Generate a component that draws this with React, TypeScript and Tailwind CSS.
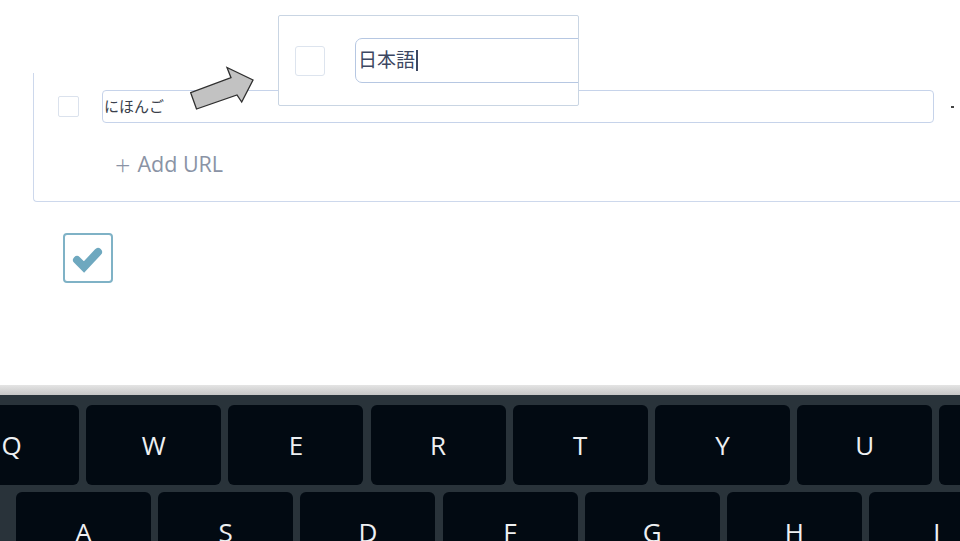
import React from "react";

const row1 = ["Q", "W", "E", "R", "T", "Y", "U", "I"];
const row2 = ["A", "S", "D", "F", "G", "H", "J"];

function Key({ label }: { label: string }) {
  return (
    <div className="w-[135px] h-[80px] shrink-0 rounded-[6px] bg-[#020a12] flex items-center justify-center text-[26px] text-[#eef0f2] leading-none">
      {label}
    </div>
  );
}

export default function App() {
  return (
    <main
      className="w-[960px] h-[541px] overflow-hidden bg-white flex flex-col"
      style={{ fontFamily: '"Open Sans", "Noto Sans CJK JP", sans-serif' }}
    >
      {/* page area */}
      <section className="relative h-[385px] shrink-0">
        <div className="mt-[73px] ml-[33px] h-[129px] border-l border-b border-[#cdd8ec] rounded-bl-[4px] flex flex-col">
          <div className="flex items-center mt-[17px] pl-[24px]">
            <div className="w-[21px] h-[21px] shrink-0 rounded-[2px] border border-[#dbe2ed]" />
            <div className="ml-[23px] w-[832px] h-[33px] shrink-0 rounded-[4px] border border-[#c6d3ea] flex items-center pl-[1px] text-[15px] text-[#3a3f4c]">
              にほんご
            </div>
            <div className="ml-[17px] w-[3px] h-[2px] bg-[#444]" />
          </div>
          <div className="mt-[25px] ml-[81px] flex items-center gap-[7px] text-[21.5px] text-[#8a93a5]">
            <span className="text-[27px] leading-none font-light">+</span>
            <span>Add URL</span>
          </div>
        </div>

        <div className="mt-[31px] ml-[63px] w-[50px] h-[50px] rounded-[4px] border-2 border-[#7fb2c6] flex items-center justify-center">
          <svg width="46" height="46" viewBox="0 0 46 46">
            <polyline
              points="12,25 19,32 33,17"
              fill="none"
              stroke="#6ea8bf"
              strokeWidth="8"
              strokeLinejoin="miter"
              strokeLinecap="round"
            />
          </svg>
        </div>

        {/* magnified popup */}
        <div className="absolute left-[278px] top-[15px] w-[301px] h-[91px] bg-white border border-[#c9d5e3] rounded-[2px] overflow-hidden flex items-center">
          <div className="ml-[16px] w-[30px] h-[30px] shrink-0 rounded-[3px] border border-[#dde4ee]" />
          <div className="ml-[30px] w-[260px] h-[45px] shrink-0 rounded-l-[7px] border border-[#b6c7e2] flex items-center pl-[2px] text-[19px] text-[#3c4762]">
            日本語
            <span className="ml-[1px] w-[2px] h-[21px] bg-[#3c4762]" />
          </div>
        </div>

        {/* arrow */}
        <svg
          className="absolute left-[186px] top-[64px]"
          width="72"
          height="50"
          viewBox="186 64 72 50"
        >
          <polygon
            points="190.7,92.7 196.5,109 237,95 241.7,102 253,80 227,67.5 231,77.7"
            fill="#c2c2c2"
            stroke="#2f2f2f"
            strokeWidth="1.3"
            strokeLinejoin="miter"
          />
        </svg>
      </section>

      {/* divider band */}
      <div className="h-[10px] shrink-0 bg-gradient-to-b from-[#e4e4e4] to-[#c6c6c6]" />

      {/* keyboard */}
      <section className="flex-1 bg-[#29333a] overflow-hidden pt-[10px] flex flex-col gap-[7px]">
        <div className="flex gap-[7.2px] ml-[-56px]">
          {row1.map((k) => (
            <Key key={k} label={k} />
          ))}
        </div>
        <div className="flex gap-[7.2px] ml-[16px]">
          {row2.map((k) => (
            <Key key={k} label={k} />
          ))}
        </div>
      </section>
    </main>
  );
}
